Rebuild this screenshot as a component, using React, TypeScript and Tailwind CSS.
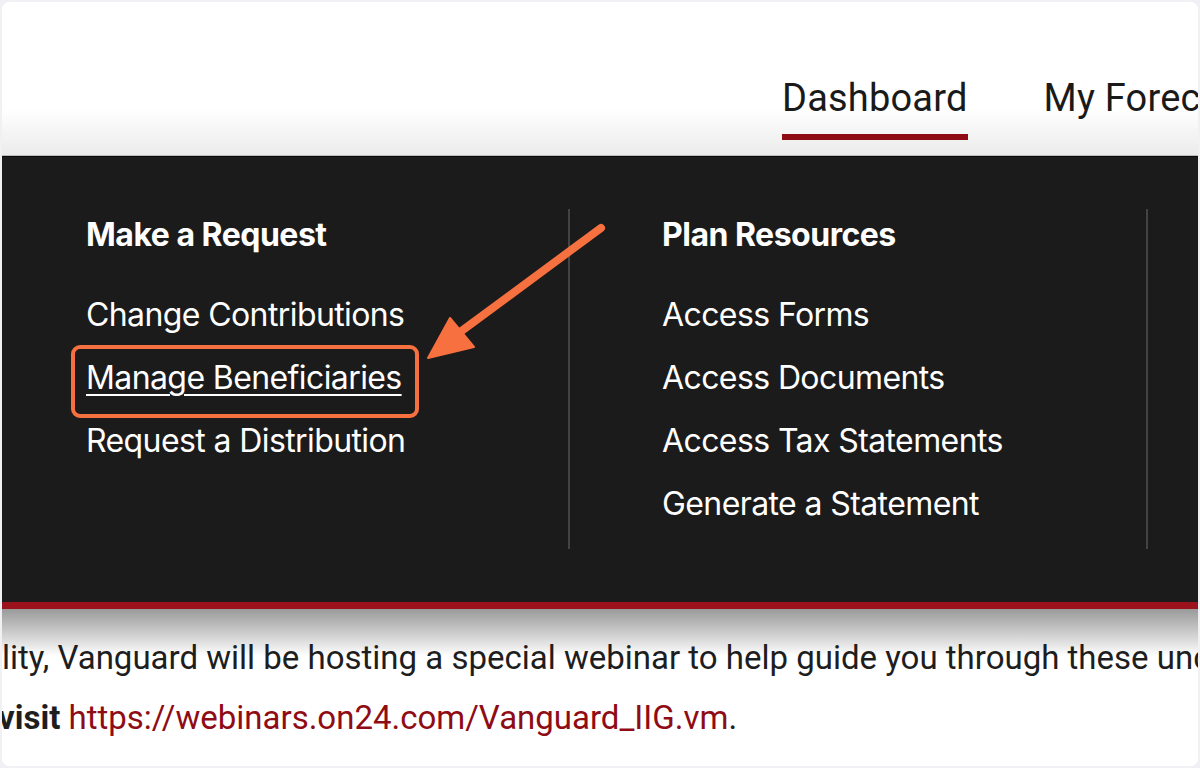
import React from "react";

export default function App() {
  return (
    <div className="w-[1200px] h-[768px] bg-[#f1f0f5] p-[2px] overflow-hidden">
      <div className="relative h-full w-full rounded-[8px] bg-white overflow-hidden flex flex-col">
        {/* Header */}
        <div className="h-[153px] shrink-0 bg-gradient-to-b from-white from-70% to-[#ebebeb] flex pl-[780px] overflow-hidden whitespace-nowrap" style={{ fontFamily: "Roboto, 'Liberation Sans', sans-serif" }}>
          <div className="flex flex-col pt-[76px]">
            <div className="text-[38px] leading-[40px] text-[#1a1a1a] tracking-[0.2px]">Dashboard</div>
            <div className="mt-[16px] h-[6px] bg-[#8f0c14]"></div>
          </div>
          <div className="pt-[76px] pl-[76px]">
            <div className="text-[38px] leading-[40px] text-[#1a1a1a] tracking-[0.2px]">My Forecast</div>
          </div>
        </div>
        <div className="h-[1px] shrink-0 bg-[#bdbdbd]"></div>
        <div className="h-[1px] shrink-0 bg-[#0a0a0a]"></div>

        {/* Dark mega menu */}
        <div className="h-[445px] shrink-0 bg-[#1b1b1b] flex pl-[84px] pt-[60px]" style={{ fontFamily: "Inter, 'Liberation Sans', sans-serif" }}>
          <div className="w-[482px] flex flex-col text-white">
            <div className="text-[32px] leading-[36px] font-bold tracking-[-0.5px]">Make a Request</div>
            <div className="mt-[44px] flex flex-col gap-[27px] text-[32px] leading-[36px] tracking-[-0.6px]">
              <div>Change Contributions</div>
              <div className="underline underline-offset-[5px] decoration-[2px]">Manage Beneficiaries</div>
              <div>Request a Distribution</div>
            </div>
          </div>
          <div className="w-[2px] bg-[#434343] mb-[53px] -mt-[8px]"></div>
          <div className="w-[576px] pl-[92px] flex flex-col text-white">
            <div className="text-[32px] leading-[36px] font-bold tracking-[-0.5px]">Plan Resources</div>
            <div className="mt-[44px] flex flex-col gap-[27px] text-[32px] leading-[36px] tracking-[-0.6px]">
              <div>Access Forms</div>
              <div>Access Documents</div>
              <div>Access Tax Statements</div>
              <div>Generate a Statement</div>
            </div>
          </div>
          <div className="w-[2px] bg-[#434343] mb-[53px] -mt-[8px]"></div>
        </div>
        <div className="h-[7px] shrink-0 bg-[#9b111c]"></div>

        {/* Body text */}
        <div className="flex-1 bg-gradient-to-b from-[#9a9a9a] via-white via-[30%] to-white whitespace-nowrap overflow-hidden pt-[29px]" style={{ fontFamily: "Roboto, 'Liberation Sans', sans-serif" }}>
          <div className="text-[33px] leading-[40px] text-[#1e1e1e]">lity, Vanguard will be hosting a special webinar to help guide you through these uncertain times.</div>
          <div className="mt-[20px] text-[33px] leading-[40px] text-[#1e1e1e] -ml-[4px]">
            <span className="font-bold">visit</span>{" "}
            <span className="text-[#8f0c14]">https://webinars.on24.com/Vanguard_IIG.vm</span>.
          </div>
        </div>

        {/* Annotation overlays */}
        <div className="absolute left-[69px] top-[343px] w-[348px] h-[73px] rounded-[9px] border-[4px] border-[#f7703f]"></div>
        <svg className="absolute left-0 top-0" width="1196" height="764" viewBox="2 2 1196 764">
          <line x1="601" y1="228" x2="452" y2="338" stroke="#f7703f" strokeWidth="8" strokeLinecap="round" />
          <polygon points="428,358 450,318 474,347" fill="#f7703f" stroke="#f7703f" strokeWidth="2" strokeLinejoin="round" />
        </svg>
      </div>
    </div>
  );
}
